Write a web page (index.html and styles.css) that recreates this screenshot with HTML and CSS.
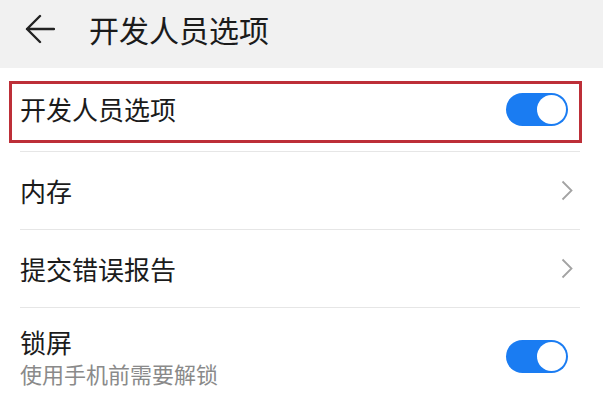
FILE: index.html
```html
<!DOCTYPE html>
<html lang="zh-CN">
<head>
<meta charset="utf-8">
<link rel="stylesheet" href="styles.css">
</head>
<body>
<header class="topbar">
  <svg class="back" width="30" height="30" viewBox="0 0 30 30"><path d="M29 15H2M15 2L2 15l13 13" fill="none" stroke="#222" stroke-width="2.4" stroke-linecap="round" stroke-linejoin="round"/></svg>
  <h1 class="title">开发人员选项</h1>
</header>
<main class="list">
  <div class="highlight">
    <span class="label">开发人员选项</span>
    <span class="switch"><span class="knob"></span></span>
  </div>
  <div class="row first">
    <span class="label">内存</span>
    <svg class="chev" width="12" height="21" viewBox="0 0 12 21"><path d="M1.5 1.5l9 9-9 9" fill="none" stroke="#a3a3a3" stroke-width="1.8"/></svg>
  </div>
  <div class="row">
    <span class="label">提交错误报告</span>
    <svg class="chev" width="12" height="21" viewBox="0 0 12 21"><path d="M1.5 1.5l9 9-9 9" fill="none" stroke="#a3a3a3" stroke-width="1.8"/></svg>
  </div>
  <div class="row tall">
    <div class="texts">
      <div class="label">锁屏</div>
      <div class="sub">使用手机前需要解锁</div>
    </div>
    <span class="switch"><span class="knob"></span></span>
  </div>
</main>
</body>
</html>
```
FILE: styles.css
```css
html, body {
  margin: 0;
  padding: 0;
  background: #ffffff;
  font-family: "Noto Sans CJK SC", "Noto Sans", sans-serif;
  color: #1b1b1b;
  overflow: hidden;
}
.topbar {
  height: 68px;
  background: #f1f1f1;
  display: flex;
  align-items: center;
  padding: 0 0 10px 25px;
  box-sizing: border-box;
}
.back { display: block; flex: none; }
.title {
  margin: 0 0 0 34px;
  font-size: 30px;
  font-weight: 400;
  line-height: 40px;
  color: #1b1b1b;
}
.list {
  padding: 0 23px 0 20px;
}
.highlight {
  margin: 13px -2px 0 -11px;
  height: 62px;
  box-sizing: border-box;
  border: 3px solid #bd2f38;
  display: flex;
  align-items: center;
  justify-content: space-between;
  padding: 0 11px 6px 8px;
}
.label {
  font-size: 26px;
  line-height: 34px;
}
.switch {
  width: 62px;
  height: 33px;
  border-radius: 17px;
  background: #1a7cf2;
  box-sizing: border-box;
  padding: 2px;
  display: flex;
  justify-content: flex-end;
  flex: none;
}
.knob {
  width: 29px;
  height: 29px;
  border-radius: 50%;
  background: #ffffff;
}
.row {
  height: 78px;
  box-sizing: border-box;
  border-top: 1px solid #e6e6e6;
  display: flex;
  align-items: center;
  justify-content: space-between;
  padding-right: 7px;
}
.row.first { margin-top: 8px; }
.row.tall {
  height: 95px;
  padding-right: 12px;
  padding-top: 2px;
}
.chev { display: block; flex: none; }
.texts { display: flex; flex-direction: column; }
.sub {
  font-size: 22px;
  line-height: 28px;
  color: #8a8a8a;
}
```
